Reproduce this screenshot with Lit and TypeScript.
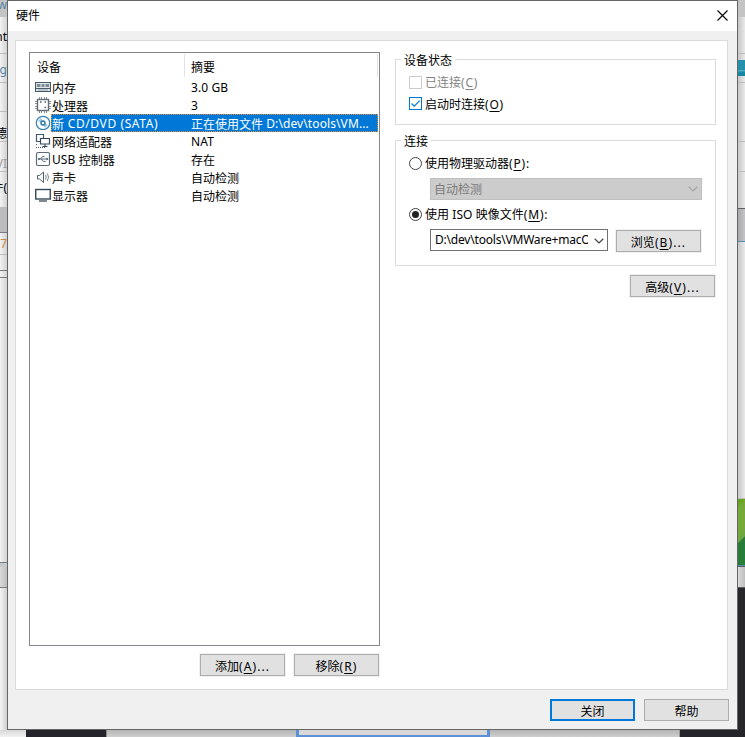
import { LitElement, html, css, svg } from "lit";
import { customElement } from "lit/decorators.js";
import { classMap } from "lit/directives/class-map.js";

const icons = {
  memory: svg`<path d="M.5 4.500h15v6h-15zM.5 10.500v3h15v-3" fill="#e4e9ec" stroke="#455a6b" stroke-width="1.200"/><path d="M2 6h3.500v3H2zM6.500 6h3v3h-3zM10.500 6H14v3h-3.500z" fill="#7d8b95"/><path d="M3 12h10" stroke="#94a0a8"/>`,
  cpu: svg`<path d="M4.500 1v16M6.500 1v16M9.500 1v16M11.500 1v16M0 5.500h16M0 7.500h16M0 10.500h16M0 12.500h16" stroke="#8b9399"/><rect x="2.500" y="3.500" width="11" height="11" fill="#fff" stroke="#626c74" stroke-width="1.400"/><path d="M5 6h1.600M9.500 6h1.600M9.500 11.500h1.600" stroke="#53616c" stroke-width="1.600"/>`,
  disc: svg`<circle cx="8" cy="9" r="6.700" fill="#fff" stroke="#3682b3" stroke-width="1.200"/><path d="M4.500 5.500l2 2M9.500 10.500l2 2" stroke="#9ccce4" stroke-width="3.500"/><circle cx="8" cy="9" r="2" fill="#fff" stroke="#2b76a6" stroke-width="1.400"/>`,
  network: svg`<path d="M1.500 2.500h7v7h-7z" fill="#fff" stroke="#455a6b" stroke-width="1.200"/><path d="M5.500 6.500h9v5.500h-9zM10 12v2.500M7.500 14.500h5" fill="#fff" stroke="#34495a" stroke-width="1.200"/><path d="M1 12.500h1M1 15.500h10" stroke="#455a6b" stroke-dasharray="1 1"/>`,
  usb: svg`<rect x="1.500" y="2.500" width="13" height="13" rx="1.500" fill="#fff" stroke="#596b79" stroke-width="1.200"/><path d="M3 9h9M5.500 9l2-2.500h2M6.500 9l2 2.500h2" fill="none" stroke="#596b79"/><path d="M11.500 7.500L13.500 9l-2 1.500z" fill="#34495a"/><circle cx="4" cy="9" r="1.100" fill="#596b79"/>`,
  sound: svg`<path d="M2.500 7.500h2l4-3.500v10.500l-4-3.500h-2z" fill="#fff" stroke="#4c5f6d"/><path d="M10.500 7q1.500 2 0 4.500M12.300 5.500q2.500 3.500 0 7.500" fill="none" stroke="#718390"/>`,
  display: svg`<rect x=".75" y="3.500" width="14.500" height="9.500" fill="#fff" stroke="#34495a" stroke-width="1.400"/><path d="M4 15h8" stroke="#34495a" stroke-width="1.300"/>`,
};

type IconName = keyof typeof icons;

const devices: { icon: IconName; name: string; summary: string; selected?: boolean }[] = [
  { icon: "memory", name: "内存", summary: "3.0 GB" },
  { icon: "cpu", name: "处理器", summary: "3" },
  { icon: "disc", name: "新 CD/DVD (SATA)", summary: "正在使用文件 D:\\dev\\tools\\VM...", selected: true },
  { icon: "network", name: "网络适配器", summary: "NAT" },
  { icon: "usb", name: "USB 控制器", summary: "存在" },
  { icon: "sound", name: "声卡", summary: "自动检测" },
  { icon: "display", name: "显示器", summary: "自动检测" },
];

/* Latin runs carry their own tracking and baseline next to the ideographs. */
const mixed = (text: string) =>
  text
    .split(/([\x20-\x7e]+)/)
    .filter(Boolean)
    .map((run) => (/^[\x20-\x7e]/.test(run) ? html`<span class="latin">${run}</span>` : run));

const mnemonic = (text: string, key: string, tail = "") =>
  html`${mixed(text)}<span class="latin key">(<u>${key}</u>)${tail}</span>`;

const chevron = html`<svg class="chevron" width="10" height="6" viewBox="0 0 10 6"><path d="M.7.8L5 5 9.300.8" fill="none" stroke="currentColor" stroke-width="1.200" /></svg>`;

@customElement("app-root")
export class AppRoot extends LitElement {
  static styles = css`
    :host {
      display: block;
      width: 745px;
      height: 737px;
      overflow: hidden;
      font: 12px/18px "Noto Sans", "Noto Sans CJK SC", sans-serif;
      color: #000;
    }
    * { box-sizing: border-box; }
    .desktop {
      display: grid;
      grid-template: 730px 7px / 7px 731px 7px;
    }
    .latin { letter-spacing: 0.1px; white-space: pre; }
    .latin.key { letter-spacing: 0.8px; }
    .button .latin.key { letter-spacing: 1.1px; }
    u { text-decoration: underline; text-underline-offset: 2px; text-decoration-skip-ink: none; }

    .edge { display: flex; flex-direction: column; overflow: hidden; }
    .edge div { flex: none; overflow: hidden; white-space: nowrap; }
    .left { background: linear-gradient(90deg, #f3f3f3, #d2d2d2); }
    .left .peek { display: flex; justify-content: flex-end; }
    .left .line, .right .line { height: 1px; background: #bcbcbc; }
    .left .dark { height: 1px; background: #777b82; }
    .right .dark { height: 1px; background: #5d5d60; }
    .h15 { height: 15px; }
    .h17 { height: 17px; background: #c4c4c4; line-height: 10px; }
    .h21 { height: 21px; }
    .h28 { height: 28px; line-height: 31px; }
    .h29 { height: 29px; line-height: 44px; }
    .h35 { height: 35px; line-height: 32px; }
    .h36 { height: 36px; line-height: 40px; }
    .shade { height: 25px; background: #bcbcbe; }
    .grow { height: 278px; }
    .muted { color: #9a9a9a; }
    .blue { color: #5684a5; }
    .orange { color: #c98843; line-height: 21px; }
    .strip { height: 4px; background: #c5c9ce; }
    .foot { height: 20px; background: linear-gradient(90deg, #dadada, #bdbdbd); }
    .fade { height: 142px; background: linear-gradient(90deg, #f5f5f5, #d0d0d0); }
    .right { background: linear-gradient(90deg, #c7c7c7, #e9e9e9); }
    .teal { height: 16px; background: linear-gradient(#2590ab 60%, #53a9bd 65%, #1787a1 80%); }
    .gap6 { height: 6px; }
    .gap58 { height: 58px; }
    .panelgray { height: 32px; background: linear-gradient(90deg, #a9a9ad, #c4c4c8); }
    .blueline { height: 1px; background: #4c91b9; }
    .gap255 { height: 256px; }
    .green { height: 66px; background: linear-gradient(135deg, #68a51f 0 8%, #75aa38 12% 44%, #6da644 60%, #287e39 61%); }
    .night { height: 142px; background: #28272c; }

    .bottom { grid-column: 1 / 4; display: flex; background: linear-gradient(#b5b5b5, #cecece); }
    .bottom div { flex: none; }
    .b-light { width: 26px; background: linear-gradient(#d7d7d7, #f1f1f1); }
    .b-night { width: 80px; background: #25242a; }
    .b-gray { width: 190px; border-left: 1px solid #8b8b8b; }
    .b-field { width: 194px; border: solid #5b8fd6; border-width: 0 3px 2px; background: #d8d8d8; }
    .b-rest { width: 190px; border-right: 1px solid #999; }
    .bottom .b-end { flex: 1; background: #25242a; }

    .window {
      height: 730px;
      border: 1px solid #666;
      background: #f0f0f0;
      display: flex;
      flex-direction: column;
    }
    .titlebar {
      height: 30px;
      flex: none;
      background: #fff;
      display: flex;
      align-items: center;
      justify-content: space-between;
      padding: 0 9px 1px 8px;
    }
    .page {
      margin: 9px 9px 0 7px;
      height: 650px;
      flex: none;
      background: #fff;
      border: 1px solid #dadada;
      padding: 11px 11px 0 13px;
      display: flex;
      gap: 15px;
    }
    .column { width: 351px; flex: none; }
    .list { height: 594px; border: 1px solid #82868f; padding-right: 1px; }
    .cells { display: grid; grid-template-columns: 154px 1fr; }
    .header { height: 25px; line-height: 28px; }
    .header > div { margin-top: 1px; height: 23px; border-right: 1px solid #e2e2e2; padding-left: 6px; }
    .header > div:first-child { padding-left: 7px; width: 155px; }
    .header > div:last-child { padding-left: 7px; }
    .row { display: flex; height: 18px; padding-left: 5px; }
    .row svg { flex: none; }
    .label {
      flex: 1;
      display: grid;
      grid-template-columns: 139px 1fr;
      padding-left: 1px;
      line-height: 22px;
      white-space: nowrap;
    }
    .label > span { height: 18px; }
    .label .latin { vertical-align: 1px; line-height: 1; }
    .selected .label { background: #0078d7; color: #fff; outline: 1px dotted #e88b35; outline-offset: -1px; line-height: 21px; }
    .selected .label > span:first-child .latin { letter-spacing: 0.6px; }
    .buttons { display: flex; justify-content: flex-end; gap: 9px; margin: 8px 1px 0 0; }
    .button {
      width: 85px;
      height: 22px;
      flex: none;
      border: 1px solid #adadad;
      background: #e1e1e1;
      box-shadow: 0 0 0 1px #f0f0f0;
      font: inherit;
      line-height: 18px;
      padding: 3px 0 0;
      color: inherit;
      display: flex;
      align-items: center;
      justify-content: center;
    }
    .default { border: 2px solid #0078d7; }
    .footer { display: flex; justify-content: flex-end; gap: 9px; padding: 9px 8px 0 0; }

    .settings { width: 321px; padding-top: 7px; }
    .group { border: 1px solid #dcdcdc; padding: 0 13px; }
    .status { height: 66px; }
    .connection { height: 126px; margin-top: 15px; }
    .legend { width: max-content; height: 18px; margin: -9px 0 0 -8px; padding: 1px 3px 0; background: #fff; }
    .choice { display: flex; align-items: center; height: 18px; gap: 3px; white-space: nowrap; }
    .text { margin-top: 2px; }
    .choice svg { flex: none; }
    .c1 { margin-top: 4px; }
    .c2 { margin-top: 3px; }
    .c2 .text { margin-top: 4px; }
    .r1 { margin-top: 4px; }
    .r2 { margin-top: 5px; }
    .disabled { color: #838383; }
    .select {
      display: flex;
      align-items: center;
      justify-content: space-between;
      height: 22px;
      padding: 0 3px;
      border: 1px solid #bfbfbf;
      background: #ccc;
      color: #7b7b7b;
      margin: 6px 0 0 21px;
      width: 272px;
    }
    .select .chevron { color: #a3a3a3; }
    .file { display: flex; gap: 8px; margin: 6px 0 0 21px; }
    .combo {
      width: 178px;
      height: 22px;
      border: 1px solid #707070;
      display: flex;
      align-items: center;
      justify-content: space-between;
      padding: 0 3px 0 4px;
    }
    .path { width: 153px; overflow: hidden; white-space: nowrap; }
    .path .latin { letter-spacing: -0.2px; }
    .combo .chevron { color: #444; margin-top: 1px; }
    .file .button { margin-top: 1px; }
    .advanced { display: flex; justify-content: flex-end; margin: 9px 1px 0 0; }
  `;

  private box(checked: boolean) {
    return html`<svg width="13" height="13" viewBox="0 0 13 13">
      <rect x=".5" y=".5" width="12" height="12" fill="#fff" stroke=${checked ? "#0078d7" : "#ccc"} />
      ${checked ? svg`<path d="M2.500 6.500l2.700 2.700 5.500-5.600" fill="none" stroke="#0078d7" stroke-width="1.200"/>` : ""}
    </svg>`;
  }

  private radio(checked: boolean) {
    return html`<svg width="13" height="13" viewBox="0 0 13 13">
      <circle cx="6.500" cy="6.500" r="6" fill="#fff" stroke="#444" />
      ${checked ? svg`<circle cx="6.500" cy="6.500" r="3.500" fill="#222"/>` : ""}
    </svg>`;
  }

  render() {
    return html`<div class="desktop">
      <div class="edge left">
        <div class="peek h17 blue">lw</div><div class="peek h36">nt</div><div class="line"></div>
        <div class="peek h28 blue">ng</div><div class="line"></div>
        <div class="h28"></div><div class="line"></div>
        <div class="peek h29">德</div><div class="line"></div>
        <div class="peek h29 muted">VI</div><div class="line"></div>
        <div class="peek h35">件(</div><div class="shade"></div><div class="dark"></div>
        <div class="peek h21 orange">7</div><div class="line"></div>
        <div class="h15"></div><div class="dark"></div>
        <div class="gap6"></div><div class="dark"></div>
        <div class="grow"></div><div class="gap6"></div><div class="dark"></div>
        <div class="strip"></div><div class="foot"></div><div class="dark"></div>
        <div class="fade"></div>
      </div>
      <main class="window">
        <div class="titlebar">
          <span>硬件</span>
          <svg width="11" height="11" viewBox="0 0 11 11"><path d="M.5.5l10 10M10.500.5l-10 10" stroke="#000" stroke-width="1.100" /></svg>
        </div>
        <section class="page">
          <div class="column">
            <div class="list">
              <div class="cells header"><div>设备</div><div>摘要</div></div>
              ${devices.map(
                (d) => html`<div class=${classMap({ row: true, selected: !!d.selected })}>
                  <svg width="16" height="18" viewBox="0 0 16 18">${icons[d.icon]}</svg>
                  <div class="label"><span>${mixed(d.name)}</span><span>${mixed(d.summary)}</span></div>
                </div>`
              )}
            </div>
            <div class="buttons">
              <button class="button"><span>${mnemonic("添加", "A", "...")}</span></button>
              <button class="button"><span>${mnemonic("移除", "R")}</span></button>
            </div>
          </div>
          <div class="settings">
            <div class="group status">
              <div class="legend">设备状态</div>
              <div class="choice c1 disabled">${this.box(false)}<span class="text">${mnemonic("已连接", "C")}</span></div>
              <div class="choice c2">${this.box(true)}<span class="text">${mnemonic("启动时连接", "O")}</span></div>
            </div>
            <div class="group connection">
              <div class="legend">连接</div>
              <div class="choice r1">${this.radio(false)}<span class="text">${mnemonic("使用物理驱动器", "P", ":")}</span></div>
              <div class="select"><span class="text">自动检测</span>${chevron}</div>
              <div class="choice r2">${this.radio(true)}<span class="text">${mnemonic("使用 ISO 映像文件", "M", ":")}</span></div>
              <div class="file">
                <div class="combo"><div class="path">${mixed("D:\\dev\\tools\\VMWare+macOS")}</div>${chevron}</div>
                <button class="button"><span>${mnemonic("浏览", "B", "...")}</span></button>
              </div>
            </div>
            <div class="advanced"><button class="button"><span>${mnemonic("高级", "V", "...")}</span></button></div>
          </div>
        </section>
        <div class="footer">
          <button class="button default"><span>关闭</span></button>
          <button class="button"><span>帮助</span></button>
        </div>
      </main>
      <div class="edge right">
        <div class="h17"></div><div class="h36"></div><div class="line"></div>
        <div class="gap6"></div><div class="teal"></div><div class="gap6"></div><div class="line"></div>
        <div class="gap58"></div><div class="line"></div><div class="h29"></div><div class="line"></div>
        <div class="h36"></div><div class="dark"></div><div class="panelgray"></div><div class="blueline"></div>
        <div class="gap255"></div><div class="line"></div><div class="green"></div><div class="blueline"></div><div class="dark"></div>
        <div class="foot"></div><div class="dark"></div>
        <div class="night"></div>
      </div>
      <div class="bottom">
        <div class="b-light"></div><div class="b-night"></div><div class="b-gray"></div>
        <div class="b-field"></div><div class="b-rest"></div><div class="b-end"></div>
      </div>
    </div>`;
  }
}
